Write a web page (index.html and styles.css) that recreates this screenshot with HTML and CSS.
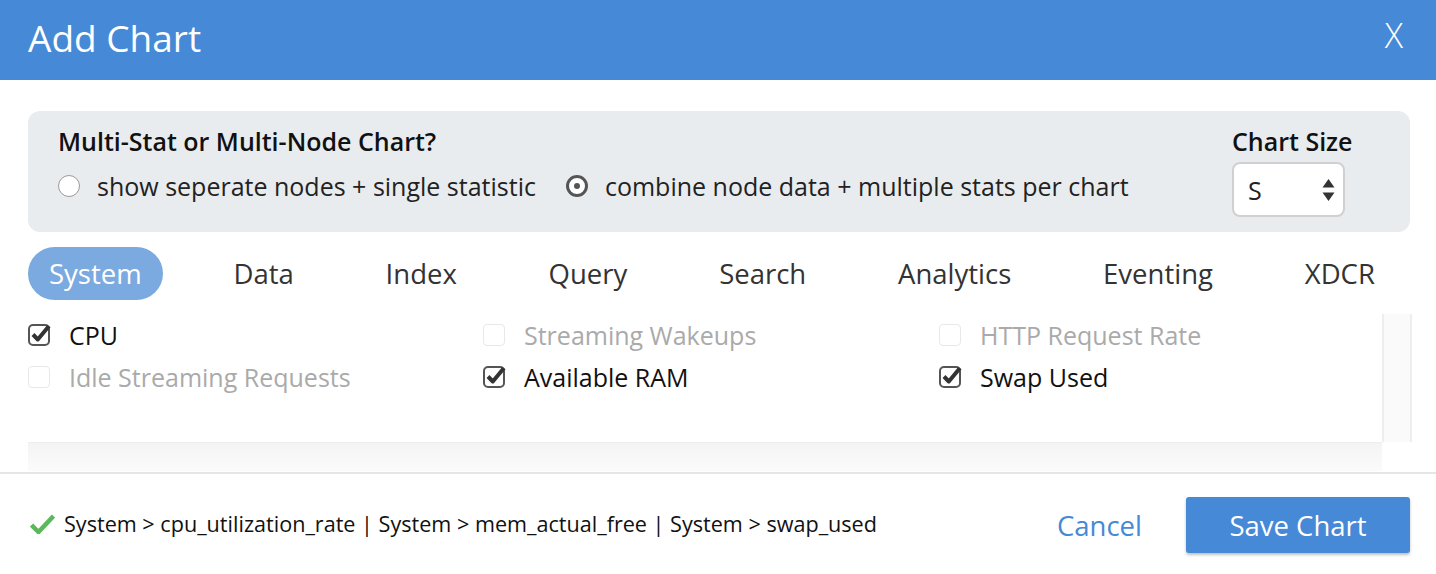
FILE: index.html
```html
<!DOCTYPE html>
<html>
<head>
<meta charset="utf-8">
<link rel="stylesheet" href="styles.css">
</head>
<body>
<div class="dialog">
  <header class="header">
    <h1 class="title">Add Chart</h1>
    <span class="close">X</span>
  </header>
  <section class="options">
    <div class="opt-left">
      <div class="opt-label">Multi-Stat or Multi-Node Chart?</div>
      <div class="radios">
        <label class="radio"><span class="radio-dot"></span>show seperate nodes + single statistic</label>
        <label class="radio"><span class="radio-dot checked"></span>combine node data + multiple stats per chart</label>
      </div>
    </div>
    <div class="opt-right">
      <div class="opt-label">Chart Size</div>
      <div class="select">
        <span>S</span>
        <svg class="arrows" width="13" height="24" viewBox="0 0 13 24"><path d="M6.5 1 L12.5 9.5 H0.5 Z" fill="#333"/><path d="M6.5 23 L12.5 14.5 H0.5 Z" fill="#333"/></svg>
      </div>
    </div>
  </section>
  <nav class="tabs">
    <span class="tab active">System</span>
    <span class="tab">Data</span>
    <span class="tab">Index</span>
    <span class="tab">Query</span>
    <span class="tab">Search</span>
    <span class="tab">Analytics</span>
    <span class="tab">Eventing</span>
    <span class="tab">XDCR</span>
  </nav>
  <div class="stats">
    <div class="stats-main">
      <div class="grid">
        <label class="stat"><span class="cb on"><svg width="24" height="24" viewBox="0 0 24 24"><rect x="1" y="2" width="20" height="20" rx="4" fill="none" stroke="#555" stroke-width="2"/><path d="M5 11.5 L9.8 16.5 L21 3" fill="none" stroke="#333" stroke-width="4" stroke-linejoin="round"/></svg></span>CPU</label>
        <label class="stat off"><span class="cb"></span>Streaming Wakeups</label>
        <label class="stat off"><span class="cb"></span>HTTP Request Rate</label>
        <label class="stat off"><span class="cb"></span>Idle Streaming Requests</label>
        <label class="stat"><span class="cb on"><svg width="24" height="24" viewBox="0 0 24 24"><rect x="1" y="2" width="20" height="20" rx="4" fill="none" stroke="#555" stroke-width="2"/><path d="M5 11.5 L9.8 16.5 L21 3" fill="none" stroke="#333" stroke-width="4" stroke-linejoin="round"/></svg></span>Available RAM</label>
        <label class="stat"><span class="cb on"><svg width="24" height="24" viewBox="0 0 24 24"><rect x="1" y="2" width="20" height="20" rx="4" fill="none" stroke="#555" stroke-width="2"/><path d="M5 11.5 L9.8 16.5 L21 3" fill="none" stroke="#333" stroke-width="4" stroke-linejoin="round"/></svg></span>Swap Used</label>
      </div>
      <div class="vscroll"></div>
    </div>
    <div class="hscroll"></div>
  </div>
  <footer class="footer">
    <div class="summary">
      <svg class="ok" width="25" height="20" viewBox="0 0 25 20"><path d="M1.5 11 L8.5 18 L23.5 2" fill="none" stroke="#5cb85c" stroke-width="4.5" stroke-linejoin="miter"/></svg>
      <span>System &gt; cpu_utilization_rate | System &gt; mem_actual_free | System &gt; swap_used</span>
    </div>
    <div class="actions">
      <button class="cancel">Cancel</button>
      <button class="save">Save Chart</button>
    </div>
  </footer>
</div>
</body>
</html>
```

FILE: styles.css
```css
* { box-sizing: border-box; }
html, body { margin: 0; padding: 0; background: #fff; }
body { font-family: "Open Sans", "Liberation Sans", sans-serif; color: #111; width: 1436px; height: 574px; overflow: hidden; }

.header {
  height: 80px;
  background: #4689d6;
  display: flex;
  align-items: center;
  justify-content: space-between;
  padding: 0 33px 0 28px;
}
.title { margin: 0 0 4px; font-size: 37px; font-weight: 500; color: #fff; line-height: 44px; }
.close { color: #fff; font-size: 34px; font-weight: 300; margin-top: -10px; }

.options {
  margin: 31px 26px 0 28px;
  height: 121px;
  background: #e9ecef;
  border-radius: 12px;
  display: flex;
  justify-content: space-between;
  padding: 13px 0 0 30px;
}
.opt-label { font-size: 25px; font-weight: 600; line-height: 34px; color: #111; }
.radios { display: flex; gap: 30px; margin-top: 11px; }
.radio { display: flex; align-items: center; font-size: 25px; line-height: 34px; color: #222; }
.radio-dot {
  width: 22px; height: 22px; border-radius: 50%;
  border: 1.5px solid #9a9a9a; background: #fff;
  margin-right: 17px; position: relative;
}
.radio-dot.checked { border: 3px solid #555; background: #fff; }
.radio-dot.checked::after {
  content: ""; position: absolute; left: 50%; top: 50%;
  width: 6px; height: 6px; margin: -3px 0 0 -3px;
  border-radius: 50%; background: #555;
}
.opt-right { width: 178px; }
.select {
  margin-top: 4px;
  width: 113px; height: 55px;
  background: #fff; border: 2px solid #d0d0d0; border-radius: 8px;
  display: flex; align-items: center; justify-content: space-between;
  padding: 0 8px 0 14px;
  font-size: 25px; color: #222;
}

.tabs {
  display: flex;
  justify-content: space-between;
  margin: 15px 40px 0 28px;
  height: 53px;
  align-items: stretch;
}
.tab {
  display: flex; align-items: center;
  padding: 0 21px;
  font-size: 27.5px; color: #333; border-radius: 27px;
}
.tab.active { background: #7aaae0; color: #fff; }

.stats { margin: 14px 24px 0 28px; height: 158px; }
.stats-main { display: flex; height: 128px; }
.grid {
  flex: 1;
  display: grid;
  grid-template-columns: 455px 456px 1fr;
  grid-auto-rows: 42px;
}
.stat { display: flex; align-items: center; font-size: 25px; color: #111; }
.stat.off { color: #aaa; }
.cb { width: 22px; height: 24px; margin-right: 19px; display: inline-block; }
.cb svg { display: block; overflow: visible; }
.stat.off .cb { height: 22px; border: 1.5px solid #e8e8e8; border-radius: 4px; }
.vscroll { width: 30px; background: #fafafa; border-left: 2px solid #eee; border-right: 2px solid #eee; }
.hscroll { height: 29px; margin-right: 30px; background: linear-gradient(#f4f4f4, #fbfbfb); border-top: 1px solid #eee; }

.footer {
  border-top: 2px solid #e6e6e6;
  display: flex; align-items: center; justify-content: space-between;
  height: 101px;
  padding: 0 26px 0 30px;
}
.summary { display: flex; align-items: center; font-size: 21.6px; color: #111; }
.ok { margin-right: 9px; }
.actions { display: flex; align-items: center; gap: 44px; margin-top: 3px; }
button { font-family: inherit; border: none; cursor: pointer; }
.cancel { background: none; color: #4689d6; font-size: 27.5px; padding: 0; }
.save {
  width: 224px; height: 56px;
  background: #4689d6; color: #fff; font-size: 27.5px;
  border-radius: 3px;
  box-shadow: 0 2px 3px rgba(0,0,0,0.25);
}
```
